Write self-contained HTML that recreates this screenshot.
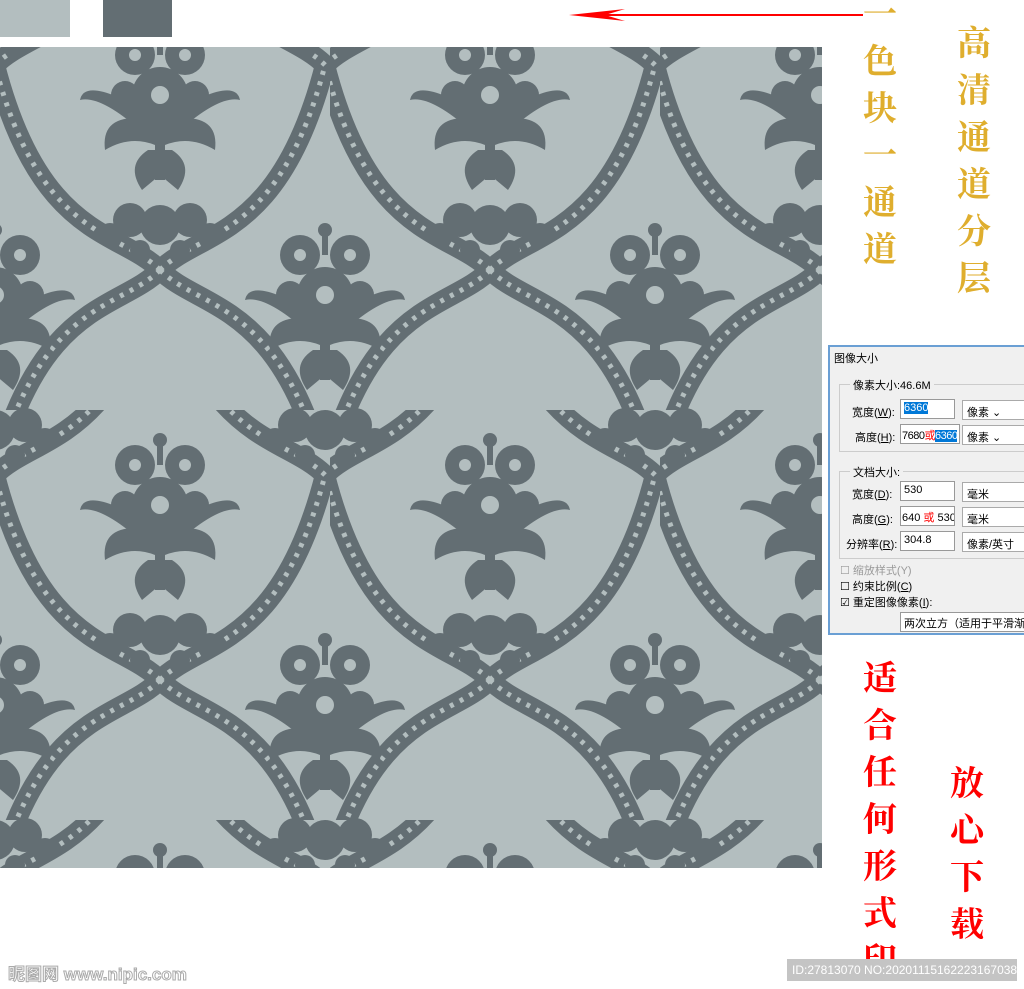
<!DOCTYPE html>
<html><head><meta charset="utf-8"><style>
*{margin:0;padding:0;box-sizing:border-box}
body{width:1024px;height:989px;background:#fff;position:relative;overflow:hidden;font-family:"Liberation Sans","Noto Sans CJK SC",sans-serif}
.abs{position:absolute}
.col{position:absolute;font-family:"Noto Serif CJK SC","Noto Sans CJK SC",serif;font-weight:700;font-size:34px;line-height:47px;width:40px;text-align:center}
.y{color:#dfae2e}.r{color:#f00}
.dlg{left:828px;top:345px;width:200px;height:290px;border:2px solid #6a9fd4;background:#f0f0f0;font-size:11px;color:#000;white-space:nowrap}
.dlg .t{position:absolute;left:4px;top:3px}
.grp{position:absolute;border:1px solid #ccc}
.lbl{position:absolute;background:#f0f0f0;padding:0 3px}
.inp{position:absolute;height:20px;border:1px solid #999;background:#fff;padding:2px 3px;white-space:nowrap;overflow:hidden;font-size:11px}
.sel{position:absolute;height:20px;border:1px solid #aaa;background:#fff;padding:3px 4px;width:70px}
.hl{background:#0078d7;color:#fff}
</style></head><body>
<div class="abs" style="left:0;top:0;width:70px;height:37px;background:#b3bebf"></div>
<div class="abs" style="left:103px;top:0;width:69px;height:37px;background:#636e73"></div>
<svg class="abs" style="left:565px;top:7px" width="300" height="18"><line x1="20" y1="8" x2="298" y2="8" stroke="#f00" stroke-width="2"/><path d="M4 8 L60 2 L40 8 L60 14Z" fill="#f00"/></svg>
<svg class="abs" style="left:0;top:47px" width="822" height="821">
<defs>
<g id="bq">
<g fill="#636e73">
<circle cx="0" cy="-70" r="7"/><rect x="-3" y="-65" width="6" height="20"/>
<circle cx="-25" cy="-45" r="20"/><circle cx="25" cy="-45" r="20"/>
<circle cx="0" cy="-5" r="28"/>
<circle cx="-35" cy="-5" r="14"/><circle cx="35" cy="-5" r="14"/>
<path d="M-8 15 Q-75 -25 -80 0 Q-60 -5 -20 30Z"/><path d="M8 15 Q75 -25 80 0 Q60 -5 20 30Z"/>
<path d="M-5 20 Q-60 10 -55 50 Q-30 35 -5 45Z"/><path d="M5 20 Q60 10 55 50 Q30 35 5 45Z"/>
<rect x="-5" y="15" width="10" height="65"/>
<path d="M-12 50 Q-35 65 -18 90 L0 75 L18 90 Q35 65 12 50Z"/>
</g>
<g fill="#b3bebf"><circle cx="-25" cy="-45" r="6"/><circle cx="25" cy="-45" r="6"/><circle cx="0" cy="-5" r="9"/></g>
</g>
<g id="sp">
<circle cx="-30" cy="0" r="17" fill="#636e73"/><circle cx="0" cy="5" r="20" fill="#636e73"/><circle cx="30" cy="0" r="17" fill="#636e73"/>
<circle cx="-50" cy="15" r="12" fill="#636e73"/><circle cx="50" cy="15" r="12" fill="#636e73"/>
<circle cx="-20" cy="30" r="10" fill="#636e73"/><circle cx="20" cy="30" r="10" fill="#636e73"/>
</g>
<pattern id="p" patternUnits="userSpaceOnUse" x="0" y="-47" width="330" height="410">
<rect width="330" height="410" fill="#b3bebf"/>
<g fill="none" stroke="#636e73" stroke-width="20" stroke-linecap="round">
<path d="M160 270 C120 230 40 240 -5 65"/><path d="M160 270 C200 230 280 240 325 65"/>
<path d="M160 270 C120 310 40 300 -5 475"/><path d="M160 270 C200 310 280 300 325 475"/>
<path d="M325 65 C285 25 205 35 160 -140"/><path d="M-5 65 C35 25 115 35 160 -140"/>
<path d="M325 475 C365 435 445 445 490 270"/><path d="M-5 475 C-45 435 -125 445 -170 270"/>
</g>
<g fill="none" stroke="#b3bebf" stroke-width="5" stroke-dasharray="4 7">
<path d="M160 270 C120 230 40 240 -5 65"/><path d="M160 270 C200 230 280 240 325 65"/>
<path d="M160 270 C120 310 40 300 -5 475"/><path d="M160 270 C200 310 280 300 325 475"/>
<path d="M325 65 C285 25 205 35 160 -140"/><path d="M-5 65 C35 25 115 35 160 -140"/>
</g>
<use href="#bq" x="160" y="100"/><use href="#bq" x="160" y="510"/>
<use href="#bq" x="325" y="300"/><use href="#bq" x="-5" y="300"/>
<use href="#sp" x="160" y="220"/><use href="#sp" x="325" y="15"/><use href="#sp" x="-5" y="15"/><use href="#sp" x="325" y="425"/><use href="#sp" x="-5" y="425"/>
</pattern>
</defs>
<rect width="822" height="821" fill="url(#p)"/>
</svg>
<div class="col y" style="left:860px;top:-12px">一<br>色<br>块<br>一<br>通<br>道</div>
<div class="col y" style="left:954px;top:17px">高<br>清<br>通<br>道<br>分<br>层</div>
<div class="col r" style="left:860px;top:652px">适<br>合<br>任<br>何<br>形<br>式<br>印</div>
<div class="col r" style="left:947px;top:757px">放<br>心<br>下<br>载</div>
<div class="abs dlg">
<div class="t">图像大小</div>
<div class="grp" style="left:9px;top:37px;width:200px;height:68px"></div><div class="lbl" style="left:20px;top:30px">像素大小:46.6M</div>
<div class="abs" style="left:22px;top:57px">宽度(<u>W</u>):</div><div class="inp" style="left:70px;top:52px;width:55px"><span class="hl">6360</span></div><div class="sel" style="left:132px;top:53px">像素 ⌄</div>
<div class="abs" style="left:25px;top:82px">高度(<u>H</u>):</div><div class="inp" style="left:70px;top:77px;width:60px;padding:2px 1px;letter-spacing:-0.5px">7680<span style="color:#f00">或</span><span class="hl">6360</span></div><div class="sel" style="left:132px;top:78px">像素 ⌄</div>
<div class="grp" style="left:9px;top:124px;width:200px;height:88px"></div><div class="lbl" style="left:20px;top:117px">文档大小:</div>
<div class="abs" style="left:22px;top:139px">宽度(<u>D</u>):</div><div class="inp" style="left:70px;top:134px;width:55px">530</div><div class="sel" style="left:132px;top:135px">毫米</div>
<div class="abs" style="left:22px;top:164px">高度(<u>G</u>):</div><div class="inp" style="left:70px;top:159px;width:55px;padding:2px 1px">640 <span style="color:#f00">或</span> 530</div><div class="sel" style="left:132px;top:160px">毫米</div>
<div class="abs" style="left:16px;top:189px">分辨率(<u>R</u>):</div><div class="inp" style="left:70px;top:184px;width:55px">304.8</div><div class="sel" style="left:132px;top:185px">像素/英寸</div>
<div class="abs" style="left:10px;top:215px;color:#999">☐ 缩放样式(Y)</div>
<div class="abs" style="left:10px;top:231px">☐ 约束比例(<u>C</u>)</div>
<div class="abs" style="left:10px;top:247px">☑ 重定图像像素(<u>I</u>):</div>
<div class="inp" style="left:70px;top:265px;width:140px">两次立方（适用于平滑渐变</div>
</div>
<div class="abs" style="left:8px;top:960px;font-size:17px;color:#fff;font-weight:bold;-webkit-text-stroke:1px #aaa">昵图网 www.nipic.com</div>
<div class="abs" style="left:787px;top:959px;width:230px;height:22px;background:#c4c4c4;color:#fff;font-size:12px;line-height:22px;padding-left:5px;white-space:nowrap;overflow:hidden">ID:27813070 NO:20201115162223167038</div>
</body></html>
